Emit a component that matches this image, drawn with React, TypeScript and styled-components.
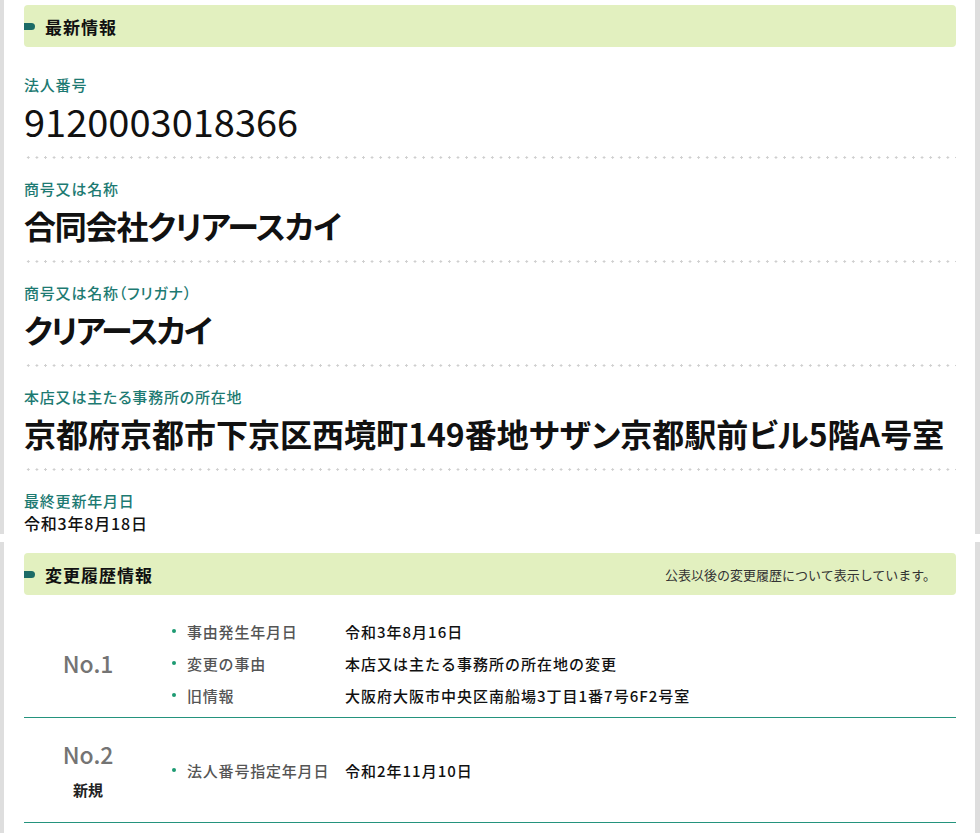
import React from "react";
import styled, { createGlobalStyle } from "styled-components";

const GlobalStyle = createGlobalStyle`
  html, body {
    margin: 0;
    padding: 0;
    background: #dedede;
  }
  body {
    font-family: "Noto Sans CJK JP", "Noto Sans", sans-serif;
    color: #111;
  }
`;

const Page = styled.div`
  display: flex;
  flex-direction: column;
  min-height: 833px;
`;

const Panel = styled.section<{ $top: number; $grow?: boolean }>`
  background: #fff;
  margin: 0 5px 0 4px;
  padding: ${(p) => p.$top}px 19px 0 20px;
  flex: ${(p) => (p.$grow ? "1" : "none")};
`;

const Band = styled.div`
  height: 8px;
  background: #fff;
`;

const SectionHeader = styled.div`
  height: 42px;
  background: #e2f0bf;
  border-radius: 4px;
  display: flex;
  align-items: center;
  justify-content: space-between;
  padding-right: 20px;
`;

const HeaderTitle = styled.h2`
  margin: 0;
  display: flex;
  align-items: center;
  font-size: 17px;
  font-weight: 700;
  letter-spacing: 1px;
  color: #111;
  &::before {
    content: "";
    width: 11px;
    height: 7px;
    background: #1c6b66;
    border-radius: 0 4px 4px 0;
    margin-right: 10px;
  }
`;

const HeaderNote = styled.span`
  font-size: 13px;
  color: #333;
`;

const Fields = styled.dl`
  margin: 27px 0 0;
`;

const Field = styled.div<{ $last?: boolean }>`
  padding: ${(p) => (p.$last ? "0" : "0 0 16px")};
  margin-bottom: ${(p) => (p.$last ? "0" : "19px")};
  background-image: ${(p) =>
    p.$last ? "none" : "radial-gradient(circle, #cfcfcf 1px, transparent 1.3px)"};
  background-size: 8.6px 3px;
  background-repeat: repeat-x;
  background-position: left bottom;
`;

const Label = styled.dt`
  font-size: 15px;
  line-height: 22px;
  font-weight: 500;
  color: #1d7a72;
  letter-spacing: 0.8px;
  font-feature-settings: "palt";
`;

const Value = styled.dd<{ $kind: "number" | "big" | "small"; $tracking: number }>`
  margin: ${(p) => (p.$kind === "small" ? "0" : "3px 0 0")};
  line-height: ${(p) => (p.$kind === "small" ? "22px" : "44px")};
  font-size: ${(p) => (p.$kind === "number" ? "38px" : p.$kind === "big" ? "32px" : "16px")};
  font-weight: ${(p) => (p.$kind === "number" ? 400 : p.$kind === "big" ? 700 : 500)};
  letter-spacing: ${(p) => p.$tracking}px;
  font-feature-settings: "palt";
  color: #111;
  white-space: nowrap;
`;

const History = styled.div`
  margin-top: 14px;
`;

const Row = styled.div`
  display: flex;
  align-items: center;
  padding: 6px 0;
  border-bottom: 1px solid #24937d;
`;

const NoCol = styled.div<{ $pad: number }>`
  width: 128px;
  flex: none;
  display: flex;
  flex-direction: column;
  align-items: center;
  gap: 10px;
  padding: ${(p) => p.$pad}px 0;
`;

const NoText = styled.div`
  font-size: 23px;
  line-height: 30px;
  color: #747474;
  font-weight: 500;
`;

const Tag = styled.div`
  font-size: 15px;
  line-height: 22px;
  font-weight: 700;
  color: #222;
`;

const Items = styled.ul`
  list-style: none;
  margin: 0;
  padding: 0 0 0 20px;
`;

const Item = styled.li`
  display: flex;
  align-items: center;
  height: 32px;
  font-size: 15px;
  letter-spacing: 0.8px;
  &::before {
    content: "";
    width: 4px;
    height: 4px;
    border-radius: 50%;
    background: #1d9a72;
    margin-right: 11px;
    flex: none;
  }
`;

const ItemLabel = styled.span`
  width: 158px;
  flex: none;
  color: #555;
  font-weight: 500;
`;

const ItemValue = styled.span`
  color: #111;
  font-weight: 500;
  letter-spacing: 1px;
  white-space: nowrap;
`;

const fields = [
  { label: "法人番号", value: "9120003018366", kind: "number" as const, tracking: 0 },
  { label: "商号又は名称", value: "合同会社クリアースカイ", kind: "big" as const, tracking: -1.2 },
  { label: "商号又は名称（フリガナ）", value: "クリアースカイ", kind: "big" as const, tracking: -2.2 },
  {
    label: "本店又は主たる事務所の所在地",
    value: "京都府京都市下京区西境町149番地サザン京都駅前ビル5階A号室",
    kind: "big" as const,
    tracking: 0,
  },
  { label: "最終更新年月日", value: "令和3年8月18日", kind: "small" as const, tracking: 0.8 },
];

const history = [
  {
    no: "No.1",
    tag: "",
    pad: 0,
    items: [
      ["事由発生年月日", "令和3年8月16日"],
      ["変更の事由", "本店又は主たる事務所の所在地の変更"],
      ["旧情報", "大阪府大阪市中央区南船場3丁目1番7号6F2号室"],
    ],
  },
  {
    no: "No.2",
    tag: "新規",
    pad: 15,
    items: [["法人番号指定年月日", "令和2年11月10日"]],
  },
];

export default function App() {
  return (
    <>
      <GlobalStyle />
      <Page>
        <Panel $top={5}>
          <SectionHeader>
            <HeaderTitle>最新情報</HeaderTitle>
          </SectionHeader>
          <Fields>
            {fields.map((f, i) => (
              <Field key={f.label} $last={i === fields.length - 1}>
                <Label>{f.label}</Label>
                <Value $kind={f.kind} $tracking={f.tracking}>
                  {f.value}
                </Value>
              </Field>
            ))}
          </Fields>
        </Panel>
        <Band />
        <Panel $top={11} $grow>
          <SectionHeader>
            <HeaderTitle>変更履歴情報</HeaderTitle>
            <HeaderNote>公表以後の変更履歴について表示しています。</HeaderNote>
          </SectionHeader>
          <History>
            {history.map((h) => (
              <Row key={h.no}>
                <NoCol $pad={h.pad}>
                  <NoText>{h.no}</NoText>
                  {h.tag && <Tag>{h.tag}</Tag>}
                </NoCol>
                <Items>
                  {h.items.map(([k, v]) => (
                    <Item key={k}>
                      <ItemLabel>{k}</ItemLabel>
                      <ItemValue>{v}</ItemValue>
                    </Item>
                  ))}
                </Items>
              </Row>
            ))}
          </History>
        </Panel>
      </Page>
    </>
  );
}
